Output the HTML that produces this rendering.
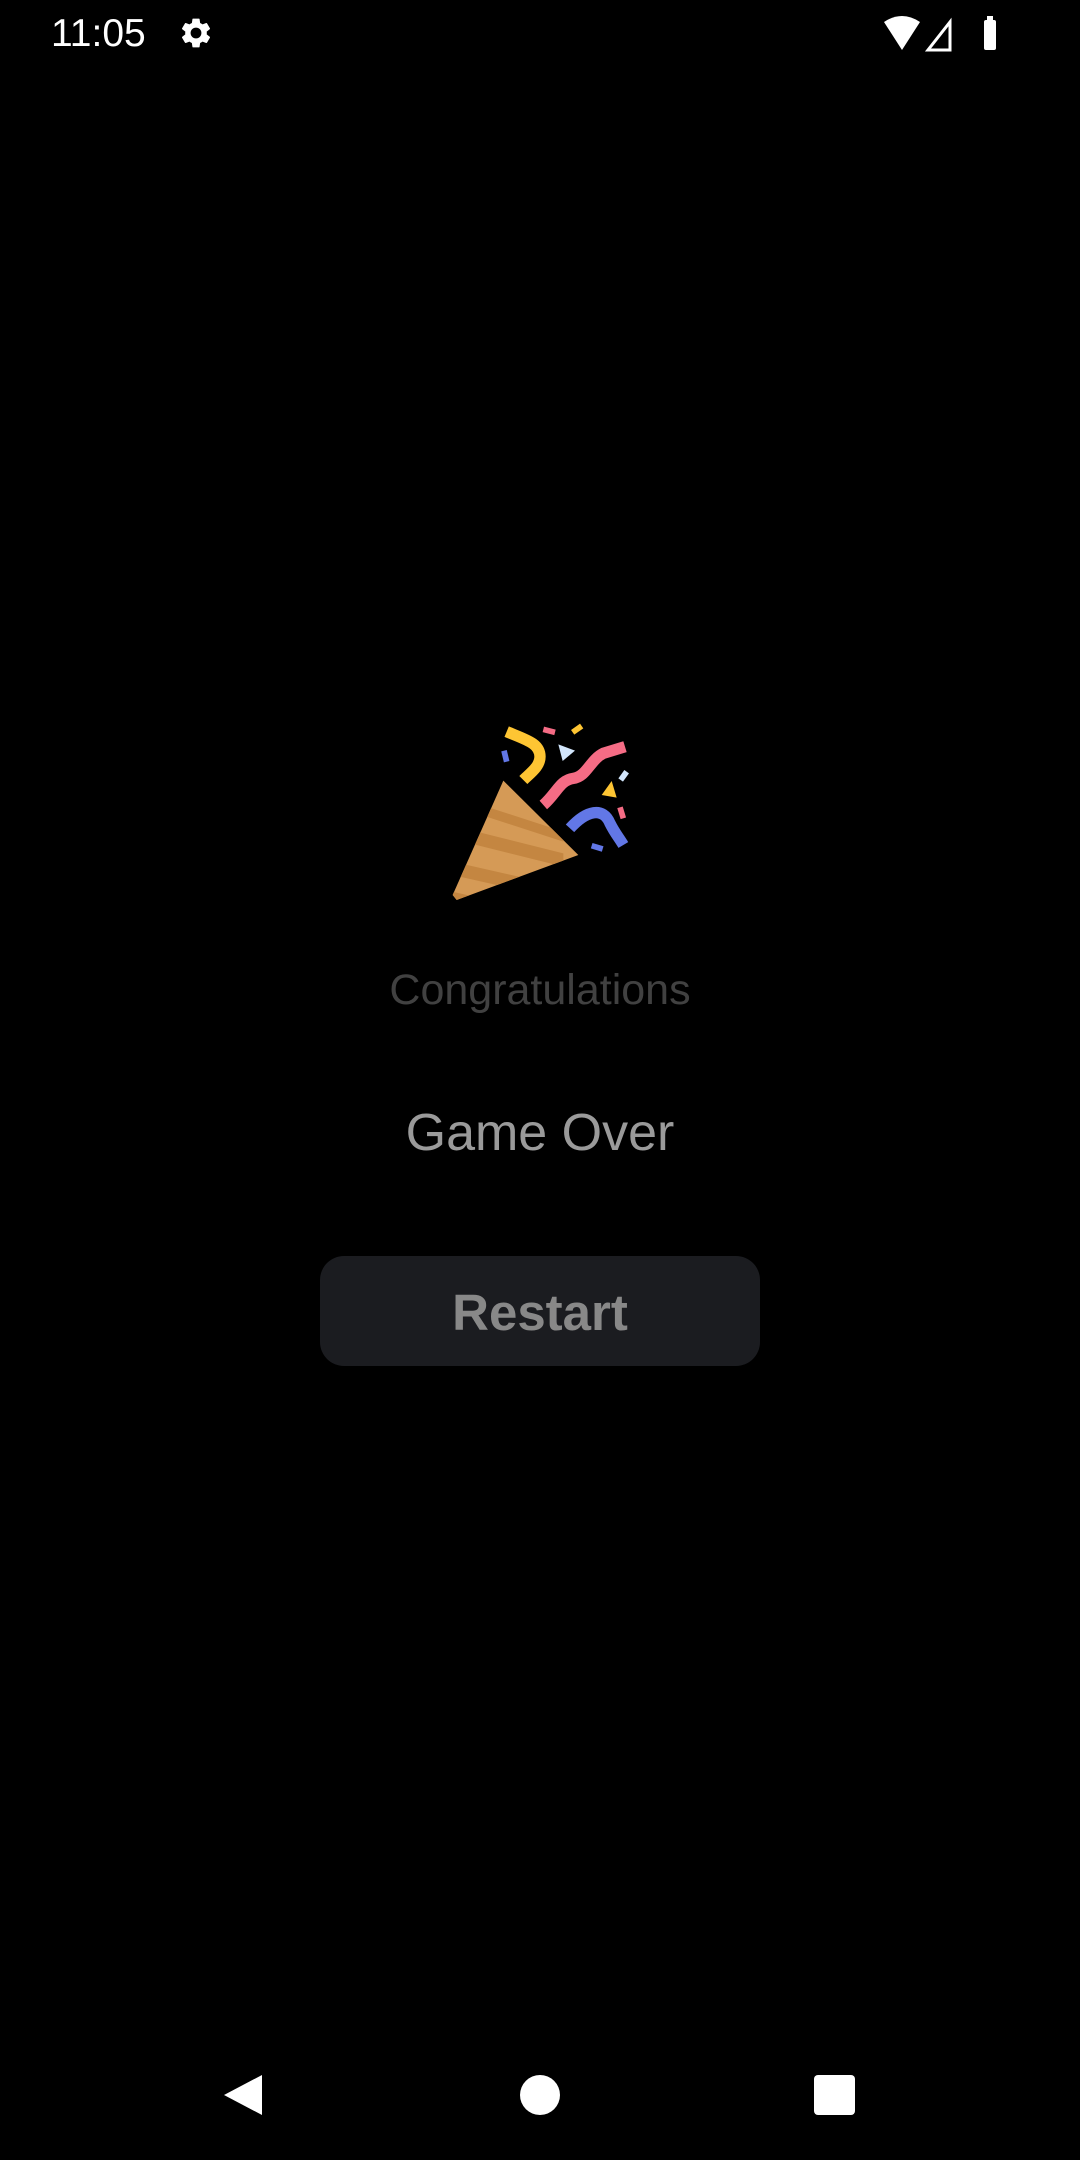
<!DOCTYPE html>
<html><head><meta charset="utf-8"><style>
html,body{margin:0;padding:0;background:#000;width:1080px;height:2160px;overflow:hidden;font-family:"Liberation Sans",sans-serif;position:relative}
.t{position:absolute;left:0;width:1080px;text-align:center;white-space:nowrap}
</style></head><body>
<div style="position:absolute;left:51px;top:12px;color:#fff;font-size:39px;line-height:44px">11:05</div>
<svg style="position:absolute;left:178px;top:15px" width="36" height="36" viewBox="0 0 24 24"><path fill="#fff" d="M19.14 12.94c.04-.3.06-.61.06-.94 0-.32-.02-.64-.07-.94l2.03-1.58a.49.49 0 0 0 .12-.61l-1.920-3.32a.49.49 0 0 0-.59-.22l-2.39.96c-.5-.38-1.03-.7-1.62-.94l-.36-2.54a.48.48 0 0 0-.48-.41h-3.84c-.24 0-.43.17-.47.41l-.36 2.54c-.59.24-1.13.57-1.62.94l-2.39-.96c-.22-.08-.47 0-.59.22L2.740 8.87c-.12.21-.08.47.12.61l2.03 1.58c-.05.3-.09.63-.09.94s.02.64.07.94l-2.03 1.58a.49.49 0 0 0-.12.61l1.92 3.32c.12.22.37.29.59.22l2.39-.96c.5.38 1.03.7 1.62.94l.36 2.54c.05.24.24.41.48.41h3.84c.24 0 .44-.17.47-.41l.36-2.54c.59-.24 1.13-.56 1.62-.94l2.39.96c.22.08.47 0 .59-.22l1.92-3.32c.12-.22.07-.47-.12-.61l-2.01-1.58zM12 15.6A3.6 3.6 0 1 1 12 8.4a3.6 3.6 0 0 1 0 7.2z"/></svg>
<svg style="position:absolute;left:880px;top:14px" width="140" height="38" viewBox="0 0 140 38">
<path d="M4 8 Q22 -4 40 8 L22 36 Z" fill="#fff"/>
<path d="M70 8 L70 36 L48 36 Z" fill="none" stroke="#fff" stroke-width="3"/>
<rect x="104" y="6" width="12" height="30" rx="2" fill="#fff"/><rect x="107" y="2" width="6" height="5" fill="#fff"/>
</svg>
<svg style="position:absolute;left:430px;top:700px" width="220" height="220" viewBox="0 0 660 660">
<defs><clipPath id="c"><polygon points="220,242 445,465 80,600 68,585"/></clipPath></defs>
<polygon points="220,242 445,465 80,600 68,585" fill="#d59a56"/>
<g clip-path="url(#c)" fill="#c48641">
<polygon points="0,265 400,395 400,425 0,295"/>
<polygon points="0,360 400,460 400,500 0,400"/>
<polygon points="0,470 400,560 400,600 0,510"/>
<polygon points="0,560 400,650 400,700 0,600"/>
</g>
<g fill="none" stroke-width="34" stroke-linecap="butt">
<path d="M230 95 C290 120 330 130 330 170 C330 200 300 220 280 240" stroke="#fec533"/>
<path d="M340 315 C380 280 390 240 430 235 C470 230 480 180 520 160 L585 140" stroke="#f56c85"/>
<path d="M420 385 C470 330 520 320 540 370 C555 400 565 410 580 435" stroke="#6277e6"/>
</g>
<g stroke-width="17">
<line x1="340" y1="88" x2="375" y2="97" stroke="#f56c85"/>
<line x1="428" y1="97" x2="455" y2="78" stroke="#fec533"/>
<line x1="222" y1="152" x2="230" y2="185" stroke="#6277e6"/>
<line x1="572" y1="240" x2="590" y2="215" stroke="#d2e6fc"/>
<line x1="570" y1="322" x2="580" y2="355" stroke="#f56c85"/>
<line x1="485" y1="437" x2="518" y2="447" stroke="#6277e6"/>
</g>
<polygon points="385,133 435,152 398,183" fill="#d2e6fc"/>
<polygon points="545,243 560,293 515,285" fill="#fec533"/>
</svg>
<div class="t" style="top:966px;font-size:43px;color:#414141">Congratulations</div>
<div class="t" style="top:1103px;font-size:52px;color:#9a9a9a">Game Over</div>
<div style="position:absolute;left:320px;top:1256px;width:440px;height:110px;border-radius:24px;background:#1b1c20"></div>
<div class="t" style="top:1283px;font-size:51px;font-weight:bold;color:#888">Restart</div>
<svg style="position:absolute;left:0;top:2070px" width="1080" height="50">
<polygon points="224,25 262,5 262,45" fill="#fff"/>
<circle cx="540" cy="25" r="20" fill="#fff"/>
<rect x="814" y="5" width="41" height="40" rx="4" fill="#fff"/>
</svg>
</body></html>
